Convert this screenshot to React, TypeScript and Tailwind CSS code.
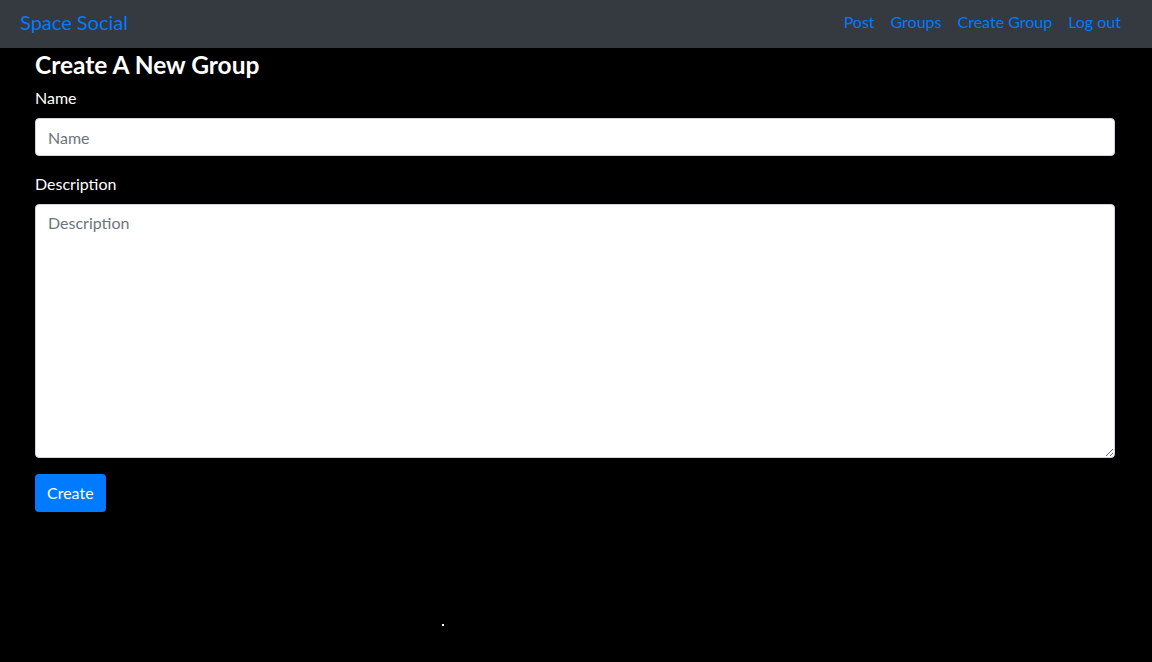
export default function App() {
  const font = { fontFamily: 'Lato, "Open Sans", Arial, sans-serif' };
  return (
    <div className="relative min-h-[662px] bg-black text-white" style={font}>
      {/* ── Navbar ── */}
      <nav className="flex h-12 items-center justify-between bg-[#343a40] pl-5 pr-[23px] pb-1">
        <a className="text-[20px] leading-none text-[#007bff]" href="#">Space Social</a>
        <ul className="flex items-center text-[16px] text-[#007bff]">
          {['Post', 'Groups', 'Create Group', 'Log out'].map((l) => (
            <li key={l}>
              <a className="px-2 block" href="#">{l}</a>
            </li>
          ))}
        </ul>
      </nav>

      {/* ── Form ── */}
      <main className="px-[35px] pr-[37px]">
        <h1 className="pt-[2px] text-[24.5px] font-bold leading-[30px]">Create A New Group</h1>
        <div className="mt-[6px]">
          <label className="block text-[16px] leading-6 mb-2">Name</label>
          <input
            placeholder="Name"
            className="block h-[38px] w-full rounded border border-[#ced4da] bg-white px-3 text-[16px] text-[#495057] placeholder:text-[#6c757d] outline-none"
          />
        </div>
        <div className="mt-4">
          <label className="block text-[16px] leading-6 mb-2">Description</label>
          <textarea
            placeholder="Description"
            className="block h-[254px] w-full rounded border border-[#ced4da] bg-white px-3 py-[6px] text-[16px] text-[#495057] placeholder:text-[#6c757d] outline-none"
          />
        </div>
        <button className="mt-4 h-[38px] rounded bg-[#007bff] px-3 text-[16px] text-white">Create</button>
      </main>

      {/* lone star */}
      <span className="absolute left-[442px] top-[624px] h-[2px] w-[2px] bg-[#fff8dc]" />
    </div>
  );
}
